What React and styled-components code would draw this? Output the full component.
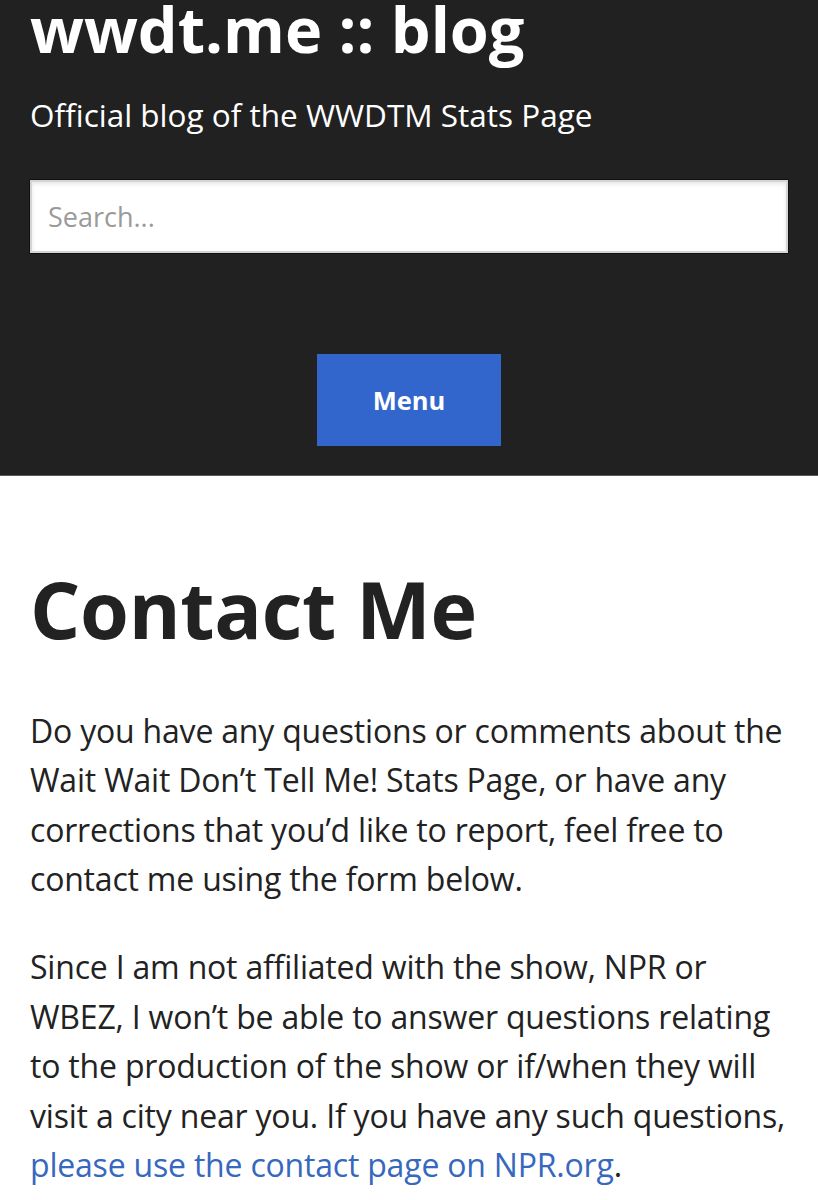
import styled, { createGlobalStyle } from "styled-components";

const GlobalStyle = createGlobalStyle`
  body {
    margin: 0;
    background: #fff;
    font-family: "Open Sans", "Liberation Sans", sans-serif;
    color: #222;
  }
`;

const Header = styled.header`
  background: #212121;
  border-bottom: 1px solid #5a5a5a;
  padding: 0 30px 29px;
  display: flex;
  flex-direction: column;
`;

const SiteTitle = styled.h1`
  margin: -3px 0 0;
  font-size: 63px;
  line-height: 1;
  font-weight: 700;
  color: #fff;
`;

const Tagline = styled.p`
  margin: 35px 0 0;
  font-size: 31.5px;
  line-height: 1.3;
  color: #fff;
`;

const SearchInput = styled.input`
  margin-top: 44px;
  box-sizing: border-box;
  width: 100%;
  height: 73px;
  padding: 0 16px;
  border: 2px solid #d4d4d4;
  background: #fff;
  box-shadow: inset 0 2px 4px rgba(0, 0, 0, 0.1), 0 0 0 1px #111;
  font-family: inherit;
  font-size: 27px;
  color: #222;
  outline: none;
  &::placeholder {
    color: #9a9a9a;
  }
`;

const MenuButton = styled.button`
  align-self: center;
  margin-top: 101px;
  width: 184px;
  height: 92px;
  border: 0;
  background: #3366cc;
  color: #fff;
  font-family: inherit;
  font-weight: 700;
  font-size: 25.5px;
`;

const Main = styled.main`
  padding: 0 30px;
`;

const PageTitle = styled.h2`
  margin: 86px 0 49px;
  font-size: 79px;
  line-height: 1.2;
  font-weight: 700;
  letter-spacing: -0.3px;
  color: #222;
`;

const Paragraph = styled.p`
  margin: 0 0 39px;
  font-size: 32px;
  line-height: 49.4px;
  letter-spacing: -0.2px;
`;

const Link = styled.a`
  color: #3668bd;
  text-decoration: none;
`;

export default function App() {
  return (
    <>
      <GlobalStyle />
      <Header>
        <SiteTitle>wwdt.me :: blog</SiteTitle>
        <Tagline>Official blog of the WWDTM Stats Page</Tagline>
        <SearchInput type="search" placeholder="Search..." />
        <MenuButton>Menu</MenuButton>
      </Header>
      <Main>
        <PageTitle>Contact Me</PageTitle>
        <Paragraph>
          Do you have any questions or comments about the Wait Wait Don’t Tell
          Me! Stats Page, or have any corrections that you’d like to report,
          feel free to contact me using the form below.
        </Paragraph>
        <Paragraph>
          Since I am not affiliated with the show, NPR or WBEZ, I won’t be able
          to answer questions relating to the production of the show or
          if/when they will visit a city near you. If you have any such
          questions, <Link href="#">please use the contact page on NPR.org</Link>.
        </Paragraph>
      </Main>
    </>
  );
}
